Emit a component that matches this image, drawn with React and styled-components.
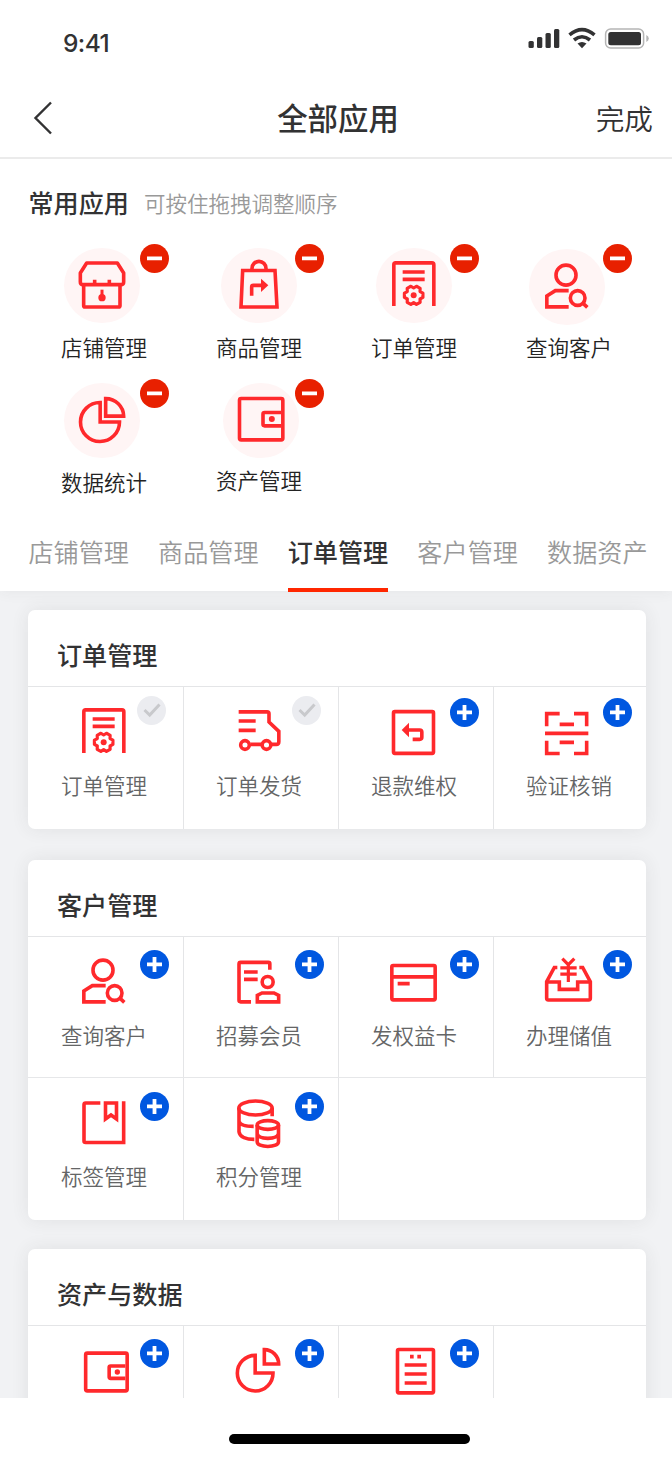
import React from 'react';
import styled, { createGlobalStyle } from 'styled-components';

const GlobalStyle = createGlobalStyle`
  * { box-sizing: border-box; }
  body {
    margin: 0;
    background: #fff;
    color: #323233;
    font-family: "Noto Sans CJK SC", "Noto Sans", sans-serif;
    font-weight: 350;
  }
`;

const Phone = styled.div`
  width: 672px;
  height: 1458px;
  display: flex;
  flex-direction: column;
  overflow: hidden;
  background: #fff;
`;

const StatusBar = styled.div`
  height: 79px;
  flex: none;
  display: flex;
  justify-content: space-between;
  align-items: flex-start;
  padding: 27px 22px 0 63px;
`;

const Time = styled.span`
  font: 500 24.5px/32px Inter, sans-serif;
  letter-spacing: -0.6px;
`;

const StatusIcons = styled.svg`
  width: 122px;
  height: 22px;
  display: block;
`;

const NavBar = styled.header`
  height: 80px;
  flex: none;
  display: grid;
  grid-template-columns: 1fr auto 1fr;
  align-items: center;
  padding: 0 19px 0 33px;
  border-bottom: 2px solid #ebebeb;
`;

const BackIcon = styled.svg`
  width: 20px;
  height: 34px;
  display: block;
`;

const NavTitle = styled.h1`
  margin: 0 10px 2px 0;
  font-size: 30.4px;
  font-weight: 500;
  line-height: 40px;
`;

const NavAction = styled.span`
  justify-self: end;
  font-size: 28.7px;
  line-height: 40px;
`;

const Favourites = styled.section`
  height: 362px;
  flex: none;
  padding-top: 26px;
`;

const FavHeader = styled.div`
  height: 33px;
  display: flex;
  align-items: center;
  padding-left: 28.5px;
  gap: 15px;
`;

const FavTitle = styled.h2`
  margin: 0;
  font-size: 25.1px;
  font-weight: 500;
  line-height: 32px;
`;

const FavHint = styled.span`
  font-size: 21.5px;
  line-height: 32px;
  color: #999;
  padding-top: 2px;
`;

const FavGrid = styled.div`
  display: grid;
  grid-template-columns: repeat(4, 155px);
  grid-auto-rows: 135px;
  padding: 26px 0 0 28px;
`;

const FavItem = styled.div`
  position: relative;
  padding-top: ${(p) => 3.5 + (p.$drop || 0)}px;
`;

const Disc = styled.div`
  width: 75.5px;
  height: 75.5px;
  margin-left: ${(p) => p.$inset}px;
  border-radius: 50%;
  background: #fff5f5;
  display: flex;
  align-items: center;
  justify-content: center;
`;

const FavLabel = styled.div`
  margin: ${(p) => p.$gap}px 0 0 33px;
  font-size: 21.5px;
  line-height: 32px;
  color: #232323;
  white-space: nowrap;
`;

const Glyph = styled.svg`
  width: 58px;
  height: 58px;
  display: block;
  flex: none;
  overflow: visible;
  fill: none;
  stroke: #ff292c;
  stroke-width: 10.8;

  .solid {
    fill: #ff292c;
    stroke: none;
  }
`;

const badgeColors = { remove: '#e82000', add: '#0057e0', done: '#ebecf0' };

const BadgeMark = styled.svg`
  position: absolute;
  top: ${(p) => p.$top}px;
  left: ${(p) => p.$left}px;
  width: 29px;
  height: 29px;
  border-radius: 50%;
  background: ${(p) => badgeColors[p.$kind]};
  fill: none;
  stroke: ${(p) => (p.$kind === 'done' ? '#c8c9cc' : '#fff')};
  stroke-width: ${(p) => (p.$kind === 'done' ? 3 : 3.8)};
`;

const Tabs = styled.nav`
  height: 70px;
  flex: none;
  display: flex;
  gap: 29.1px;
  padding-left: 28.4px;
  position: relative;
  z-index: 1;
  background: #fff;
  box-shadow: 0 0 14px rgba(50, 50, 60, 0.07);
  clip-path: inset(0 0 -20px 0);
`;

const Tab = styled.span`
  height: 70.5px;
  padding-top: 13px;
  flex: none;
  font-size: 25.15px;
  line-height: 34px;
  font-weight: ${(p) => (p.$active ? 500 : 350)};
  color: ${(p) => (p.$active ? '#323233' : '#999')};
  border-bottom: 4px solid ${(p) => (p.$active ? '#ff2600' : 'transparent')};
`;

const Content = styled.main`
  flex: 1;
  min-height: 0;
  overflow: hidden;
  display: flex;
  flex-direction: column;
  padding: 19px 26px 0 28px;
  background: #f1f2f4;
`;

const Card = styled.section`
  flex: none;
  height: ${(p) => p.$height}px;
  margin-bottom: ${(p) => p.$gap || 0}px;
  border-radius: 7px;
  background: #fff;
  box-shadow: 0 0 18px rgba(50, 50, 60, 0.09);
`;

const CardTitle = styled.h2`
  height: 77px;
  margin: 0;
  padding: 27px 0 0 29px;
  font-size: 25.1px;
  font-weight: 500;
  line-height: 34px;
  border-bottom: 1px solid #e4e5e7;
`;

const TileRow = styled.div`
  display: grid;
  grid-template-columns: 155px 155px 155px 1fr;
  height: ${(p) => p.$height}px;
  border-top: ${(p) => (p.$ruled ? '1px solid #e6e7e9' : 'none')};
`;

const Tile = styled.div`
  position: relative;
  padding-top: 16.3px;

  & + & {
    border-left: 1px solid #e4e5e7;
    margin-right: -1px;
  }
`;

const TileIcon = styled.div`
  margin-left: ${(p) => (p.$first ? 47.3 : 46.3)}px;
`;

const TileLabel = styled.div`
  margin: 8.2px 0 0 ${(p) => (p.$first ? 33 : 32)}px;
  font-size: 21.5px;
  line-height: 32px;
  color: #646566;
  white-space: nowrap;
`;

const Footer = styled.footer`
  height: 60px;
  flex: none;
  display: flex;
  justify-content: center;
  padding: 36px 0 0 27px;
  background: #fff;
`;

const HomeBar = styled.div`
  width: 241px;
  height: 10px;
  border-radius: 5px;
  background: #000;
`;

const gearPath = (cx, cy) => {
  const at = (r, deg) => {
    const a = (deg * Math.PI) / 180;
    return `${(cx + r * Math.cos(a)).toFixed(1)} ${(cy + r * Math.sin(a)).toFixed(1)}`;
  };
  const points = [0, 60, 120, 180, 240, 300].flatMap((d) => [
    at(28.5, d - 13),
    at(28.5, d + 13),
    at(22, d + 30),
  ]);
  return `M${points.join('L')}Z`;
};

const icons = {
  shop: {
    box: '100 79 174 174',
    art: (
      <>
        <path strokeLinejoin="round" d="M141 100H233L252 130V157Q252 165 244 165H130Q122 165 122 157V130Z" />
        <path d="M132 165V228Q132 232 136 232H237Q241 232 241 228V165M165 150V166M209 150V166" />
        <path strokeWidth="9" d="M187 180V200" />
        <circle className="solid" cx="187" cy="204" r="11" />
      </>
    ),
  },
  bag: {
    box: '570 79 174 174',
    art: (
      <>
        <path d="M608 122.500H705L711 232H603Z" />
        <path d="M636 122V116A21 21 0 0 1 678 116V122" />
        <path d="M635 198V172Q635 167 640 167H665" />
        <path className="solid" d="M663 147L685 167L663 187Z" />
      </>
    ),
  },
  order: {
    box: '166 70 174 174',
    art: (
      <>
        <path d="M192.500 220V96Q192.500 90.500 198 90.500H307Q312.500 90.500 312.500 96V220" />
        <path d="M219 118H285M219 140H285" />
        <path strokeWidth="9.500" strokeLinejoin="round" d={gearPath(252, 188)} />
        <circle className="solid" cx="252" cy="188" r="9" />
      </>
    ),
  },
  customer: {
    box: '166 70 174 174',
    art: (
      <>
        <circle cx="250" cy="121.500" r="30" />
        <path d="M258 168H218L192.500 184V216.500H258" />
        <circle cx="285" cy="190" r="22" />
        <path d="M299 204L314 218" />
      </>
    ),
  },
  pieLarge: {
    box: '100 64 174 174',
    art: (
      <>
        <path d="M181.500 98.500A58.500 58.500 0 1 0 239.500 157H181.500Z" />
        <path d="M198 87A54 53 0 0 1 252 139.500H198Z" />
      </>
    ),
  },
  walletLarge: {
    box: '575 64 174 174',
    art: (
      <>
        <rect x="597.500" y="86.500" width="130" height="124" rx="5" />
        <path d="M722 128.500H673Q668 128.500 668 133V164Q668 168.500 673 168.500H722" />
        <circle className="solid" cx="694.500" cy="148" r="9" />
      </>
    ),
  },
  truck: {
    box: '631 70 174 174',
    art: (
      <>
        <path d="M657 96.500H742Q748 96.500 748 102V127L777.500 155V186Q777.500 194 770 194H757M724 194H693M657 124H708M657 152H708" />
        <circle cx="676" cy="196" r="13" />
        <circle cx="740.500" cy="196" r="13" />
      </>
    ),
  },
  refund: {
    box: '148 70 174 174',
    art: (
      <>
        <rect x="173.500" y="96" width="120" height="125" rx="4" />
        <path d="M218 151H252Q258.500 151 258.500 157V173Q258.500 179 252 179H231" />
        <path className="solid" d="M198 151L220 129V173Z" />
      </>
    ),
  },
  scan: {
    box: '613 70 174 174',
    art: (
      <path d="M633 140V102H672M715 102H753V140M633 183V221.500H672M715 221.500H753V183M628 161H758M672 134H715M672 188H715" />
    ),
  },
  recruit: {
    box: '631 70 174 174',
    art: (
      <>
        <path d="M750.500 120V102Q750.500 98 746 98H663Q658 98 658 103V212Q658 216.500 663 216.500H694M673 127H714M673 149H714" />
        <circle cx="744" cy="157" r="16.500" />
        <path d="M713 216.500V197L727 190H763L777 197V216.500Z" />
      </>
    ),
  },
  card: {
    box: '148 70 174 174',
    art: (
      <>
        <rect x="168.500" y="107.500" width="130" height="103" rx="4" />
        <path d="M168 141.500H299M186 162H222" />
      </>
    ),
  },
  deposit: {
    box: '613 70 174 174',
    art: (
      <>
        <path d="M665 113.500H656L633 156V206Q633 211 638 211H759Q764 211 764 206V156L741 113.500H731" />
        <path d="M633 157H671V179H726V157H764" />
        <path strokeWidth="9.500" d="M680 87L698 105L716 87M698 103V157M674 114.500H723M674 133.500H723" />
      </>
    ),
  },
  label: {
    box: '166 492 174 174',
    art: (
      <>
        <path d="M242 519H198Q193 519 193 524V633Q193 637.500 198 637.500H312V514" />
        <path d="M257.500 519H290.500V567L274 555L257.500 567Z" />
      </>
    ),
  },
  points: {
    box: '631 492 174 174',
    art: (
      <>
        <ellipse cx="707.500" cy="534" rx="50" ry="21" />
        <path d="M658 534V605C660 621 681 628 704 628M757.500 534V559M658 574C661 586 682 589 702 589" />
        <ellipse cx="744.500" cy="585" rx="32" ry="13" />
        <path d="M712.500 585V635C712.500 644 727 649.500 744.500 649.500S776.500 644 776.500 635V585M712.500 611C715 621 729 625 744.500 625S774 621 776.500 611" />
      </>
    ),
  },
  wallet: {
    box: '166 97 174 174',
    art: (
      <>
        <rect x="198" y="130.500" width="124.500" height="113" rx="5" />
        <path d="M317 169H273Q268.500 169 268.500 173V202Q268.500 206 273 206H317" />
        <circle className="solid" cx="293" cy="187" r="8" />
      </>
    ),
  },
  pie: {
    box: '631 97 174 174',
    art: (
      <>
        <path d="M706.500 137A53.500 53.500 0 1 0 760 190H706.500Z" />
        <path d="M734 120A43 43 0 0 1 777 163H734Z" />
      </>
    ),
  },
  bill: {
    box: '1096 97 174 174',
    art: (
      <>
        <rect x="1133.500" y="119.500" width="108" height="130" rx="4" />
        <path d="M1171 141H1182M1193 141H1204M1155 166H1221M1155 193H1221M1155 220H1221" />
      </>
    ),
  },
};

const badgePaths = {
  remove: 'M7 14.400H22',
  add: 'M7 14.400H22M14.500 7V22',
  done: 'M7.500 14L12.700 19L22.500 8.500',
};

const favourites = [
  { icon: 'shop', label: '店铺管理', inset: 36.3 },
  { icon: 'bag', label: '商品管理', inset: 38 },
  { icon: 'order', label: '订单管理', inset: 38 },
  { icon: 'customer', label: '查询客户', inset: 36.3, drop: 1.5, badgeLeft: 110 },
  { icon: 'pieLarge', label: '数据统计', inset: 36.3 },
  { icon: 'walletLarge', label: '资产管理', inset: 40, lift: 2 },
];

const tabs = ['店铺管理', '商品管理', '订单管理', '客户管理', '数据资产'];

const sections = [
  {
    title: '订单管理',
    height: 219,
    gap: 31,
    rows: [
      {
        height: 142,
        badgeTop: 11,
        tiles: [
          { icon: 'order', label: '订单管理', done: true },
          { icon: 'truck', label: '订单发货', done: true },
          { icon: 'refund', label: '退款维权' },
          { icon: 'scan', label: '验证核销' },
        ],
      },
    ],
  },
  {
    title: '客户管理',
    height: 360,
    gap: 29,
    rows: [
      {
        height: 140,
        badgeTop: 13,
        tiles: [
          { icon: 'customer', label: '查询客户' },
          { icon: 'recruit', label: '招募会员' },
          { icon: 'card', label: '发权益卡' },
          { icon: 'deposit', label: '办理储值' },
        ],
      },
      {
        height: 143,
        badgeTop: 14.3,
        tiles: [{ icon: 'label', label: '标签管理' }, { icon: 'points', label: '积分管理' }, {}],
      },
    ],
  },
  {
    title: '资产与数据',
    height: 219,
    rows: [
      {
        height: 142,
        badgeTop: 13,
        tiles: [{ icon: 'wallet' }, { icon: 'pie' }, { icon: 'bill' }, {}],
      },
    ],
  },
];

function Icon({ name }) {
  return <Glyph viewBox={icons[name].box}>{icons[name].art}</Glyph>;
}

function Badge({ kind, top, left }) {
  return (
    <BadgeMark $kind={kind} $top={top} $left={left} viewBox="0 0 29 29">
      <path d={badgePaths[kind]} />
    </BadgeMark>
  );
}

function AppTile({ tile, index, badgeTop }) {
  if (!tile.icon) return <Tile />;
  const border = index > 0 ? 1 : 0;
  const left = (index === 3 ? 110 : 112) - border - (tile.done ? 3.3 : 0);
  return (
    <Tile>
      <TileIcon $first={index === 0}>
        <Icon name={tile.icon} />
      </TileIcon>
      <TileLabel $first={index === 0}>{tile.label}</TileLabel>
      <Badge kind={tile.done ? 'done' : 'add'} top={badgeTop - (tile.done ? 2 : 0)} left={left} />
    </Tile>
  );
}

export default function App() {
  return (
    <Phone>
      <GlobalStyle />
      <StatusBar>
        <Time>9:41</Time>
        <StatusIcons viewBox="528 27 122 22">
          <g fill="#323233">
            <rect x="528.500" y="41" width="5.300" height="7" rx="1.500" />
            <rect x="537" y="37" width="5.300" height="11" rx="1.500" />
            <rect x="545.500" y="33" width="5.300" height="15" rx="1.500" />
            <rect x="554" y="29" width="5.300" height="19" rx="1.500" />
            <path d="M577.500 43.500Q582 40.300 586.500 43.500L582 48.200Z" />
            <rect x="608.300" y="32" width="32.700" height="13.300" rx="2.500" />
            <path d="M646.300 35Q648.800 36.300 648.800 38.500T646.300 42Z" fill="#b5b5b5" />
          </g>
          <path d="M569.500 34.800Q582 24.500 594.500 34.800M574 40Q582 33.500 590 40" fill="none" stroke="#323233" strokeWidth="3.600" />
          <rect x="605.600" y="29" width="38" height="19" rx="5" fill="none" stroke="#b5b5b5" strokeWidth="1.500" />
        </StatusIcons>
      </StatusBar>
      <NavBar>
        <BackIcon viewBox="0 0 20 34">
          <path d="M18 1.500L2.500 17L18 32.500" fill="none" stroke="#323233" strokeWidth="2.400" />
        </BackIcon>
        <NavTitle>全部应用</NavTitle>
        <NavAction>完成</NavAction>
      </NavBar>
      <Favourites>
        <FavHeader>
          <FavTitle>常用应用</FavTitle>
          <FavHint>可按住拖拽调整顺序</FavHint>
        </FavHeader>
        <FavGrid>
          {favourites.map((f) => (
            <FavItem key={f.icon} $drop={f.drop}>
              <Disc $inset={f.inset}>
                <Icon name={f.icon} />
              </Disc>
              <FavLabel $gap={8 - (f.drop || 0) - (f.lift || 0)}>{f.label}</FavLabel>
              <Badge kind="remove" top={0} left={f.badgeLeft || 112} />
            </FavItem>
          ))}
        </FavGrid>
      </Favourites>
      <Tabs>
        {tabs.map((t, i) => (
          <Tab key={t} $active={i === 2}>
            {t}
          </Tab>
        ))}
      </Tabs>
      <Content>
        {sections.map((s) => (
          <Card key={s.title} $height={s.height} $gap={s.gap}>
            <CardTitle>{s.title}</CardTitle>
            {s.rows.map((row, r) => (
              <TileRow key={r} $height={row.height} $ruled={r > 0}>
                {row.tiles.map((tile, i) => (
                  <AppTile key={i} tile={tile} index={i} badgeTop={row.badgeTop} />
                ))}
              </TileRow>
            ))}
          </Card>
        ))}
      </Content>
      <Footer>
        <HomeBar />
      </Footer>
    </Phone>
  );
}
